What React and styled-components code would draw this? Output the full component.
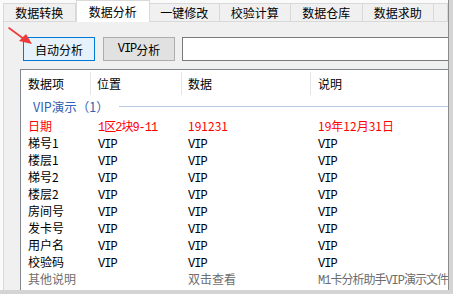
import React from 'react'
import styled, { createGlobalStyle } from 'styled-components'

const CJK = `"Noto Sans CJK SC", "Microsoft YaHei", sans-serif`
const MONO = `"Liberation Mono", "Noto Sans CJK SC", monospace`

const GlobalStyle = createGlobalStyle`
  body {
    margin: 0;
    background: #d6d6d6;
    font-family: ${CJK};
    font-size: 12px;
  }
`

const Frame = styled.div`
  width: 453px;
  height: 294px;
  background: #d4d4d4;
  position: relative;
  overflow: hidden;
`

const Window = styled.div`
  width: 448px;
  height: 290px;
  background: #fafafa;
  border-right: 1px solid #8c8c8c;
  display: flex;
  flex-direction: column;
  overflow: hidden;
`

const TabStrip = styled.div`
  height: 22px;
  padding-left: 3px;
  display: flex;
  align-items: flex-end;
  flex-shrink: 0;
`

const Tab = styled.div`
  width: ${p => p.w}px;
  height: ${p => (p.active ? 22 : 19)}px;
  box-sizing: border-box;
  border: 1px solid #d9d9d9;
  border-left: ${p => (p.first || p.active ? '1px solid #d9d9d9' : 'none')};
  border-bottom: ${p => (p.active ? 'none' : '1px solid #d9d9d9')};
  background: ${p => (p.active ? '#ffffff' : '#f0f0f0')};
  display: flex;
  align-items: center;
  justify-content: center;
  font-size: 12px;
  line-height: 16px;
  color: #000;
  white-space: nowrap;
  padding-top: ${p => (p.active ? 0 : 1)}px;
`

const Panel = styled.div`
  flex: 1;
  margin-left: 3px;
  background: #f0f0f0;
  border-left: 1px solid #d9d9d9;
  padding: 15px 0 0 16px;
  display: flex;
  flex-direction: column;
  overflow: hidden;
  min-height: 0;
`

const Toolbar = styled.div`
  display: flex;
  height: 24px;
  margin-left: 3px;
  flex-shrink: 0;
`

const Button = styled.div`
  width: 72px;
  height: 24px;
  box-sizing: border-box;
  border: 1px solid ${p => (p.primary ? '#0078d7' : '#adadad')};
  background: ${p => (p.primary ? '#e5f1fb' : '#e1e1e1')};
  display: flex;
  align-items: center;
  justify-content: center;
  margin-right: ${p => p.gap}px;
  font-size: 12px;
  color: #000;
  white-space: nowrap;
  flex-shrink: 0;
`

const Mono = styled.span`
  font-family: ${MONO};
  font-size: 12px;
  letter-spacing: -1px;
`

const Input = styled.div`
  width: 290px;
  height: 24px;
  box-sizing: border-box;
  border: 1px solid #7a7a7a;
  background: #fff;
  flex-shrink: 0;
`

const ListView = styled.div`
  margin-top: 8px;
  flex: 1;
  width: 440px;
  background: #fff;
  border-top: 1px solid #828790;
  border-left: 1px solid #828790;
  overflow: hidden;
`

const Columns = `70px 91px 129px 200px`

const Header = styled.div`
  display: grid;
  grid-template-columns: ${Columns};
  height: 26px;
  align-items: center;
`

const HeadCell = styled.div`
  height: 23px;
  padding-left: ${p => p.pad}px;
  border-right: 1px solid #e5e5e5;
  display: flex;
  align-items: center;
  font-size: 12px;
  color: #000;
`

const Group = styled.div`
  height: 21px;
  display: flex;
  align-items: center;
  padding-left: 12px;
  color: #3461b3;
  font-size: 12.5px;
  white-space: nowrap;
  &::after {
    content: '';
    flex: 1;
    height: 1px;
    background: #b9c8e2;
    margin-left: 10px;
    margin-top: -1px;
  }
`

const Row = styled.div`
  display: grid;
  grid-template-columns: ${Columns};
  height: 17px;
  line-height: 17px;
  color: ${p => p.color || '#000'};
  font-size: 12px;
  white-space: nowrap;
`

const Cell = styled.div`
  padding-left: ${p => p.pad}px;
  overflow: hidden;
`

const Arrow = styled.svg`
  position: absolute;
  left: 6px;
  top: 24px;
`

const tabs = [
  { label: '数据转换', w: 73 },
  { label: '数据分析', w: 75, active: true },
  { label: '一键修改', w: 70 },
  { label: '校验计算', w: 72 },
  { label: '数据仓库', w: 72 },
  { label: '数据求助', w: 72 },
  { label: '', w: 14 },
]

const pads = [7, 6, 6, 7]

const rows = [
  ['梯号1', 'VIP', 'VIP', 'VIP'],
  ['楼层1', 'VIP', 'VIP', 'VIP'],
  ['梯号2', 'VIP', 'VIP', 'VIP'],
  ['楼层2', 'VIP', 'VIP', 'VIP'],
  ['房间号', 'VIP', 'VIP', 'VIP'],
  ['发卡号', 'VIP', 'VIP', 'VIP'],
  ['用户名', 'VIP', 'VIP', 'VIP'],
  ['校验码', 'VIP', 'VIP', 'VIP'],
]

const App = () => (
  <Frame>
    <GlobalStyle />
    <Window>
      <TabStrip>
        {tabs.map((t, i) => (
          <Tab key={i} w={t.w} active={t.active} first={i === 0}>
            {t.label}
          </Tab>
        ))}
      </TabStrip>
      <Panel>
        <Toolbar>
          <Button primary gap={8}>自动分析</Button>
          <Button gap={7}><Mono>VIP</Mono>分析</Button>
          <Input />
        </Toolbar>
        <ListView>
          <Header>
            {['数据项', '位置', '数据', '说明'].map((h, i) => (
              <HeadCell key={h} pad={pads[i]}>{h}</HeadCell>
            ))}
          </Header>
          <Group>VIP演示（1）</Group>
          <Row color="#ff0000">
            <Cell pad={7}>日期</Cell>
            <Cell pad={7}><Mono>1区2块9-11</Mono></Cell>
            <Cell pad={6}>191231</Cell>
            <Cell pad={7}>19年12月31日</Cell>
          </Row>
          {rows.map(r => (
            <Row key={r[0]}>
              <Cell pad={7}>{r[0]}</Cell>
              <Cell pad={7}><Mono>{r[1]}</Mono></Cell>
              <Cell pad={6}><Mono>{r[2]}</Mono></Cell>
              <Cell pad={7}><Mono>{r[3]}</Mono></Cell>
            </Row>
          ))}
          <Row color="#6d6d6d">
            <Cell pad={7}>其他说明</Cell>
            <Cell pad={7}></Cell>
            <Cell pad={6}>双击查看</Cell>
            <Cell pad={7}><Mono>M1卡分析助手VIP演示文件</Mono></Cell>
          </Row>
        </ListView>
      </Panel>
    </Window>
    <Arrow width="30" height="24" viewBox="0 0 30 24">
      <line x1="3" y1="4" x2="18" y2="15" stroke="#f03a3a" strokeWidth="1.6" strokeLinecap="round" />
      <polygon points="26,20 13,17 20,10" fill="#f03a3a" />
    </Arrow>
  </Frame>
)

export default App
